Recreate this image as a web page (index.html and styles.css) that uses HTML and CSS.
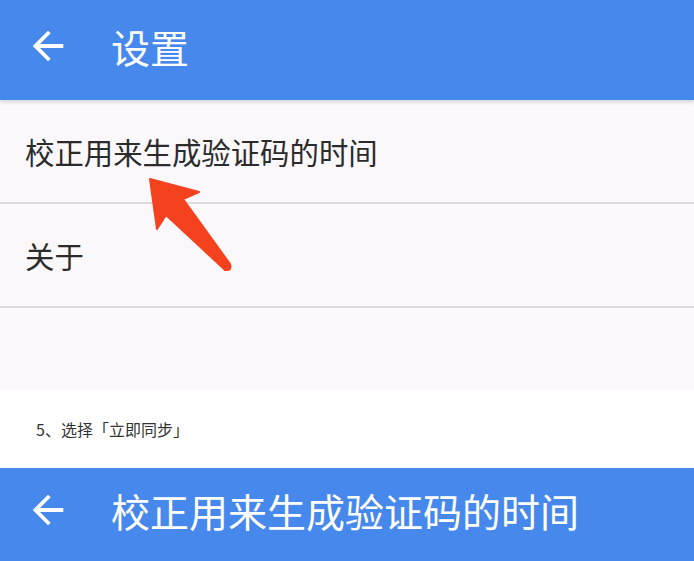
FILE: index.html
```html
<!DOCTYPE html>
<html lang="zh-CN">
<head>
    <meta charset="UTF-8">
    <meta name="viewport" content="width=device-width, initial-scale=1.0">
    <title>设置</title>
    <link rel="stylesheet" href="styles.css">
</head>
<body>
    <!-- 第一张截图：设置页 -->
    <section class="screen">
        <header class="app-bar">
            <svg class="back-icon" viewBox="0 0 24 24" width="46" height="46">
                <path d="M20 11H7.83l5.59-5.59L12 4l-8 8 8 8 1.41-1.41L7.83 13H20v-2z" fill="#fff"/>
            </svg>
            <h1 class="app-title">设置</h1>
        </header>

        <ul class="settings-list">
            <li class="settings-item">校正用来生成验证码的时间</li>
            <li class="settings-item">关于</li>
        </ul>

        <!-- 红色指示箭头 -->
        <svg class="pointer" viewBox="0 0 100 100" width="100" height="100">
            <path d="M4 3 L53 16 L37 23 L84 88 Q86 95 79 94 L77 92 L20 39 L11 53 Z" fill="#f4421f" stroke="#f4421f" stroke-width="2" stroke-linejoin="round"/>
        </svg>
    </section>

    <p class="step">5、选择「立即同步」</p>

    <!-- 第二张截图：校正时间页 -->
    <section class="screen screen-short">
        <header class="app-bar app-bar-second">
            <svg class="back-icon" viewBox="0 0 24 24" width="46" height="46">
                <path d="M20 11H7.83l5.59-5.59L12 4l-8 8 8 8 1.41-1.41L7.83 13H20v-2z" fill="#fff"/>
            </svg>
            <h1 class="app-title">校正用来生成验证码的时间</h1>
        </header>
    </section>
</body>
</html>
```

FILE: styles.css
```css
body {
    margin: 0;
    padding: 0;
    background-color: #fff;
    font-family: "Noto Sans CJK SC", "Noto Sans", sans-serif;
    color: #333;
    overflow: hidden;
}

.screen {
    position: relative;
    height: 390px;
    background-color: #faf8fb;
}

.screen-short {
    height: 100px;
}

.app-bar {
    height: 100px;
    box-sizing: border-box;
    padding: 0 0 8px 25px;
    background-color: #4788ec;
    display: flex;
    align-items: center;
    gap: 40px;
    box-shadow: 0 2px 4px rgba(0, 0, 0, 0.15);
    position: relative;
    z-index: 1;
}

.app-bar-second {
    padding-bottom: 16px;
}

.back-icon {
    display: block;
    flex-shrink: 0;
}

.app-title {
    margin: 0;
    color: #fff;
    font-size: 39px;
    font-weight: normal;
    line-height: 1;
}

/* 设置列表 */
.settings-list {
    list-style: none;
    margin: 0;
    padding: 0;
}

.settings-item {
    height: 102px;
    display: flex;
    align-items: center;
    padding-left: 25px;
    font-size: 29.4px;
    color: #2b2b2b;
    border-bottom: 2px solid #dddbde;
}

.pointer {
    position: absolute;
    left: 146px;
    top: 176px;
}

.step {
    margin: 0;
    height: 78px;
    box-sizing: border-box;
    padding: 29px 0 0 36px;
    font-size: 16px;
    line-height: 20px;
    color: #333;
}
```
